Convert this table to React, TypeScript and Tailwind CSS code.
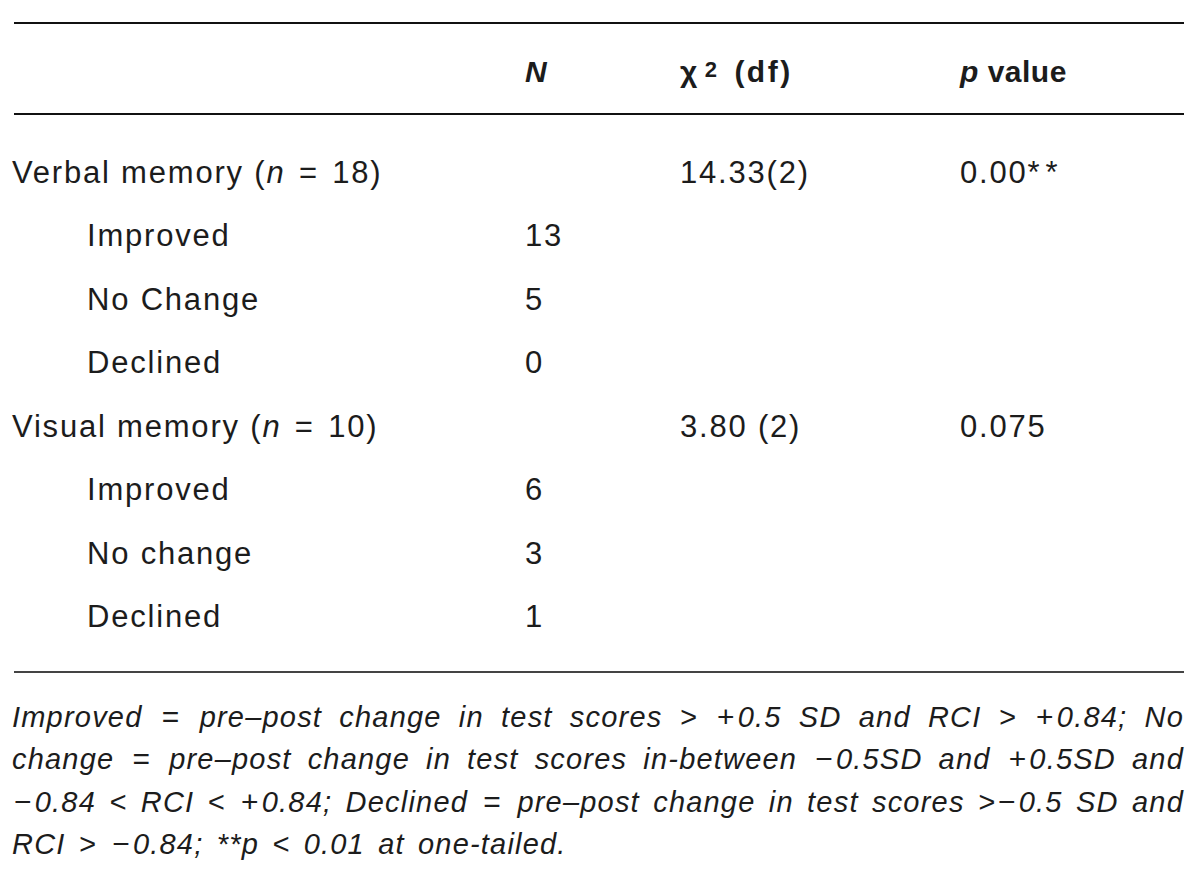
type Row = {
  label: React.ReactNode;
  indent?: boolean;
  n?: string;
  chi?: string;
  p?: React.ReactNode;
};

const rows: Row[] = [
  {
    label: <>Verbal memory (<i>n</i> <span className="mx-[3px]">=</span> 18)</>,
    chi: "14.33(2)",
    p: <>0.00<span className="tracking-[6px]">**</span></>,
  },
  { label: "Improved", indent: true, n: "13" },
  { label: "No Change", indent: true, n: "5" },
  { label: "Declined", indent: true, n: "0" },
  {
    label: <>Visual memory (<i>n</i> <span className="mx-[3px]">=</span> 10)</>,
    chi: "3.80 (2)",
    p: "0.075",
  },
  { label: "Improved", indent: true, n: "6" },
  { label: "No change", indent: true, n: "3" },
  { label: "Declined", indent: true, n: "1" },
];

// wide upright operators like in the typeset note
function fmt(s: string) {
  return s.split(/([+=−])/).map((part, i) =>
    part === "+" || part === "=" || part === "−" ? (
      <span key={i} className="not-italic mx-[2px] text-[30px]">{part}</span>
    ) : (
      <span key={i}>{part}</span>
    )
  );
}

const cols = "grid grid-cols-[513px_155px_280px_1fr] items-center pl-3";

export default function App() {
  return (
    <div className="w-[1200px] h-[873px] bg-white text-[#1c1c1c] font-['Liberation_Sans',Arial,sans-serif]">
      <div className="pt-[22px]">
        <div className="mx-[14px] mr-4 h-[2px] bg-[#111]" />
        <div className={`${cols} h-[89px] text-[30px] font-bold pt-[6px] tracking-[0.5px]`}>
          <div />
          <div><i>N</i></div>
          <div>
            χ<sup className="text-[22px] relative -top-[5px] ml-[7px] mr-[8px]">2</sup>{" "}
            <span className="tracking-[2.5px]">(df)</span>
          </div>
          <div><i>p</i> value</div>
        </div>
        <div className="mx-[14px] mr-4 h-[2px] bg-[#111]" />

        <div className="pt-[26px] pb-[22px] text-[31px] tracking-[1.8px]">
          {rows.map((r, i) => (
            <div key={i} className={`${cols} h-[63.5px]`}>
              <div className={r.indent ? "pl-[75px]" : ""}>{r.label}</div>
              <div>{r.n}</div>
              <div>{r.chi}</div>
              <div>{r.p}</div>
            </div>
          ))}
        </div>

        <div className="mx-[14px] mr-4 h-[2px] bg-[#444]" />

        <div className="pl-3 pr-4 pt-[23px] text-[29px] italic leading-[42.3px] tracking-[1.2px] [word-spacing:4px]">
          <div className="h-[42.3px] text-justify [text-align-last:justify]">
            {fmt("Improved = pre–post change in test scores > +0.5 SD and RCI > +0.84; No")}
          </div>
          <div className="h-[42.3px] text-justify [text-align-last:justify]">
            {fmt("change = pre–post change in test scores in-between −0.5SD and +0.5SD and")}
          </div>
          <div className="h-[42.3px] text-justify [text-align-last:justify]">
            {fmt("−0.84 < RCI < +0.84; Declined = pre–post change in test scores >−0.5 SD and")}
          </div>
          <div className="h-[42.3px]">{fmt("RCI > −0.84; **p < 0.01 at one-tailed.")}</div>
        </div>
      </div>
    </div>
  );
}
